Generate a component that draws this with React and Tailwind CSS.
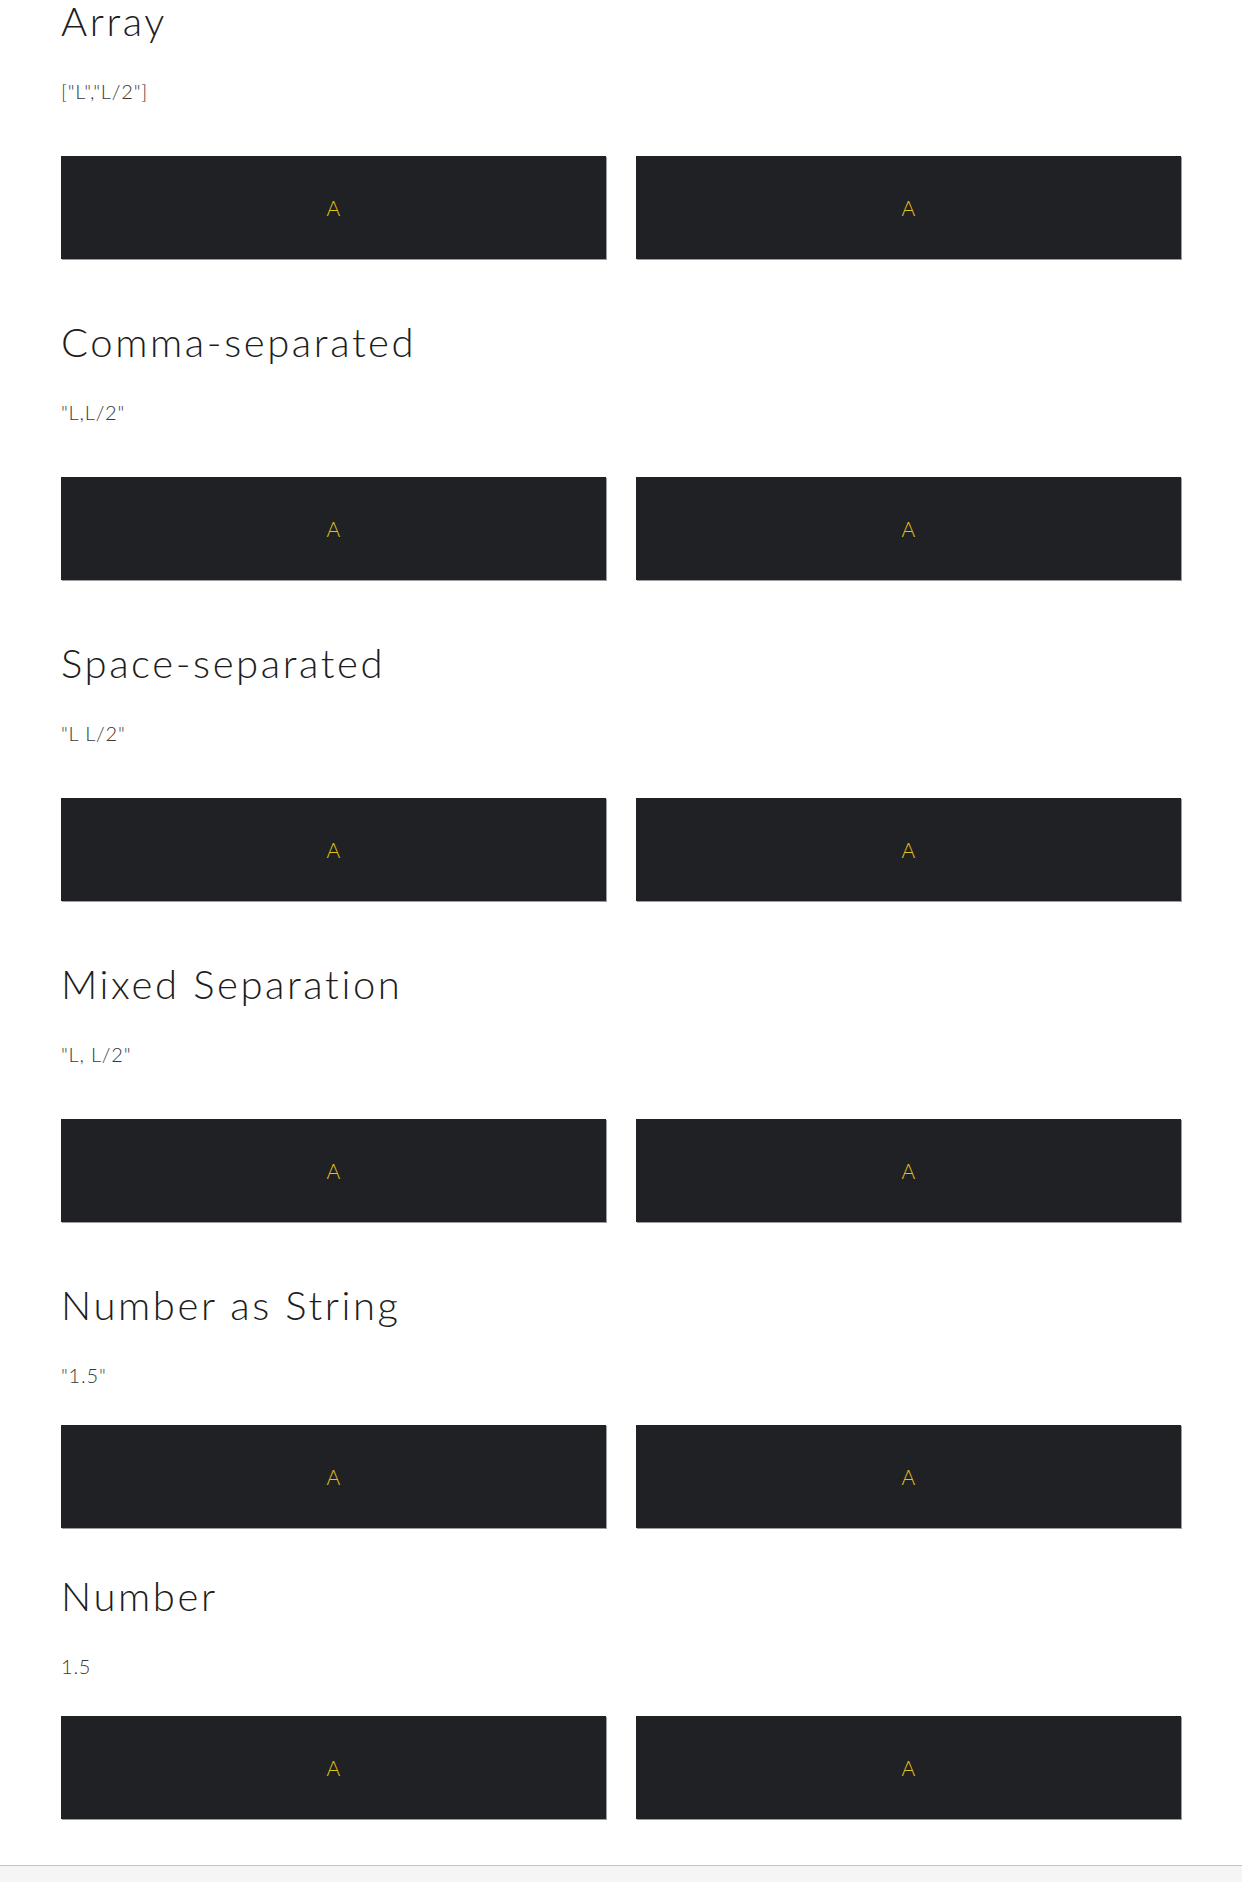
const sections = [
  { title: 'Array', value: '["L","L/2"]' },
  { title: 'Comma-separated', value: '"L,L/2"' },
  { title: 'Space-separated', value: '"L L/2"' },
  { title: 'Mixed Separation', value: '"L, L/2"' },
  { title: 'Number as String', value: '"1.5"', tight: true },
  { title: 'Number', value: '1.5', tight: true, close: true },
];

function Box() {
  return (
    <div className="h-[103px] bg-[#202124] shadow-[1px_1px_0_#9c9c9c] flex items-center justify-center">
      <span className="text-[21px] font-light text-[#e2c21a]">A</span>
    </div>
  );
}

function Section({ title, value, tight, close, first }) {
  const top = first ? 'mt-[-3px]' : close ? 'mt-[44px]' : 'mt-[59px]';
  return (
    <section className={top}>
      <h2 className="text-[40px] leading-[48px] font-light text-[#1d1d1d] tracking-[0.065em]">{title}</h2>
      <p className="mt-[34px] text-[20px] leading-[24px] font-light text-[#383838] tracking-[0.04em]">{value}</p>
      <div className={`${tight ? 'mt-[38px]' : 'mt-[53px]'} grid grid-cols-2 gap-[30px]`}>
        <Box />
        <Box />
      </div>
    </section>
  );
}

export default function App() {
  return (
    <div className="min-h-[1882px] bg-white flex flex-col overflow-hidden" style={{ fontFamily: 'Lato, "Open Sans", sans-serif' }}>
      <div className="w-[1120px] mx-auto pb-[46px]">
        {sections.map((s, i) => (
          <Section key={s.title} {...s} first={i === 0} />
        ))}
      </div>
      <div className="h-[18px] bg-[#f5f5f5] border-t border-[#c4c4c4]" />
    </div>
  );
}
